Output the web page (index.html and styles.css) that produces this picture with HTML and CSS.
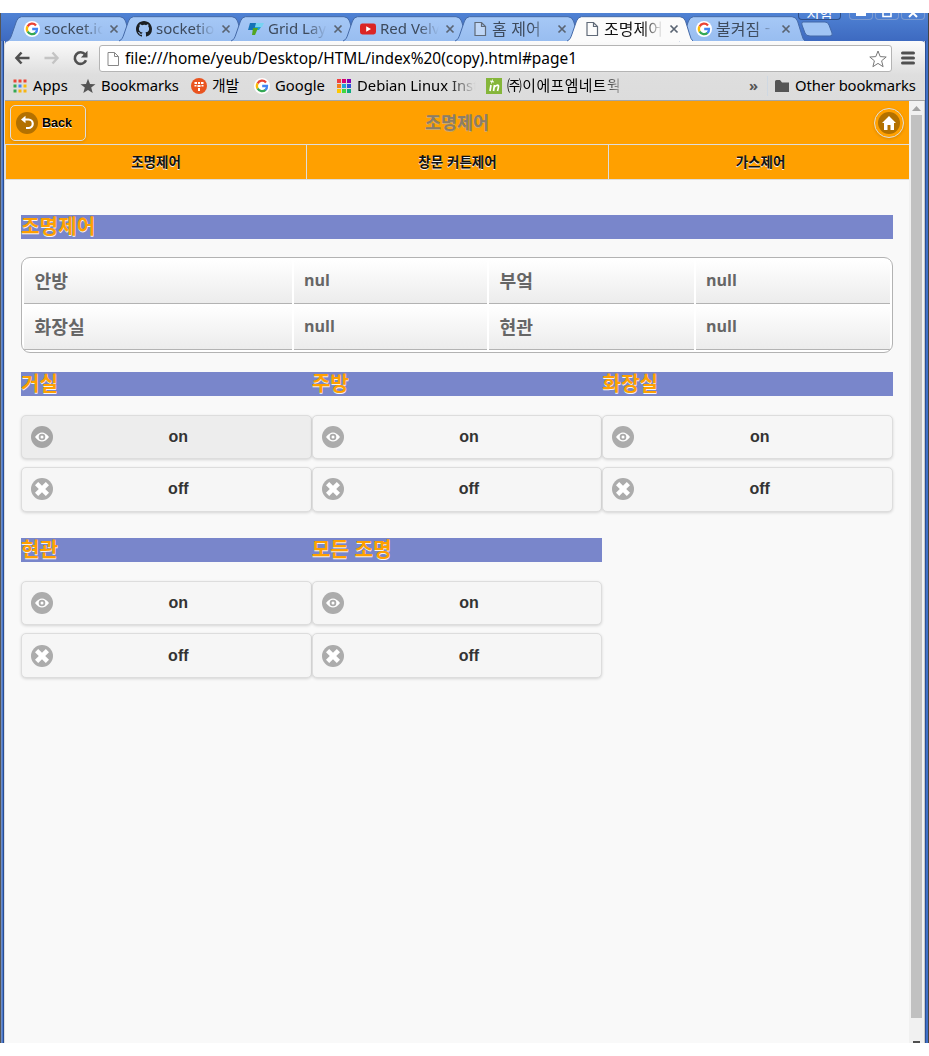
FILE: index.html
```html
<!DOCTYPE html>
<html lang="ko">
<head>
<meta charset="utf-8">
<title>조명제어</title>
<link rel="stylesheet" href="styles.css">
</head>
<body>
<svg class="defs" width="0" height="0">
  <defs>
    <linearGradient id="tabfill" x1="0" y1="0" x2="0" y2="1"><stop offset="0" stop-color="#a6c8f6"/><stop offset="1" stop-color="#98bdf0"/></linearGradient>
    <symbol id="tab" viewBox="0 0 126 26"><path d="M0 25C3 24 4 21 5 18L9.500 5Q11 1 14.500 .7H113Q117 1 118.500 5L122.500 18Q124 24 126 25" stroke="#456aa8"/></symbol>
    <symbol id="google" viewBox="0 0 16 16"><circle cx="8" cy="8" r="8" fill="#fff"/><g fill="none" stroke-width="2.3"><path d="M12 4.4A5.1 5.1 0 0 0 3.6 5.5" stroke="#ea4335"/><path d="M3.6 5.4A5.1 5.1 0 0 0 3.6 10.6" stroke="#fbbc05"/><path d="M3.6 10.5A5.1 5.1 0 0 0 11.6 11.8" stroke="#34a853"/><path d="M8.2 8H13A5 5 0 0 1 11.4 12" stroke="#4285f4"/></g></symbol>
    <symbol id="page" viewBox="0 0 16 16"><path d="M3 1.5H9.5L13.5 5.5V14.5H3ZM9.5 1.5V5.5H13.5" fill="#fff" fill-opacity=".35"/></symbol>
    <symbol id="x" viewBox="0 0 10 10"><path d="M1.5 1.5L8.5 8.5M8.5 1.5L1.5 8.5" stroke-width="1.7"/></symbol>
    <symbol id="eye" viewBox="0 0 22 22"><circle cx="11" cy="11" r="11" fill="#000" fill-opacity=".3"/><path d="M4 11Q11 1.8 18 11Q11 20.2 4 11Z" fill="#fff"/><circle cx="11" cy="11" r="2.4" fill="none" stroke="#aaa" stroke-width="1.8"/></symbol>
    <symbol id="del" viewBox="0 0 22 22"><circle cx="11" cy="11" r="11" fill="#000" fill-opacity=".3"/><path d="M18 7.2L14.8 4L11 7.8L7.2 4L4 7.2L7.8 11L4 14.8L7.2 18L11 14.2L14.8 18L18 14.8L14.2 11Z" fill="#fff"/></symbol>
  </defs>
</svg>
<div class="window">
  <div class="tabstrip">
    <div class="tab"><svg class="shape"><use href="#tab"/></svg><svg class="fav"><use href="#google"/></svg><span class="label">socket.io</span><svg class="close"><use href="#x"/></svg></div>
    <div class="tab"><svg class="shape"><use href="#tab"/></svg><svg class="fav" viewBox="0 0 16 16"><path fill="#1b1f23" d="M8 0C3.58 0 0 3.58 0 8c0 3.54 2.29 6.53 5.47 7.59.4.07.55-.17.55-.38 0-.19-.01-.82-.01-1.49-2.01.37-2.53-.49-2.69-.94-.09-.23-.48-.94-.82-1.13-.28-.15-.68-.52-.01-.53.63-.01 1.08.58 1.23.82.72 1.21 1.87.87 2.33.66.07-.52.28-.87.51-1.07-1.78-.2-3.64-.89-3.64-3.95 0-.87.31-1.59.82-2.15-.08-.2-.36-1.02.08-2.12 0 0 .67-.21 2.2.82A7.7 7.7 0 0 1 8 3.86c.68 0 1.36.09 2 .27 1.53-1.04 2.2-.82 2.2-.82.44 1.1.16 1.92.08 2.12.51.56.82 1.27.82 2.15 0 3.07-1.87 3.75-3.65 3.95.29.25.54.73.54 1.48 0 1.07-.01 1.93-.01 2.2 0 .21.15.46.55.38A8 8 0 0 0 16 8c0-4.42-3.58-8-8-8Z"/></svg><span class="label">socketio</span><svg class="close"><use href="#x"/></svg></div>
    <div class="tab"><svg class="shape"><use href="#tab"/></svg><svg class="fav" viewBox="0 0 16 16"><path d="M2 2H9L6 9H0Z" fill="#1673b7"/><path d="M8 2H16L14 6H7Z" fill="#77d3f2"/><path d="M7 6H13L11 9H6Z" fill="#1fa2d5"/><path d="M5 7H10L7 14H4Z" fill="#52a51f"/></svg><span class="label">Grid Layo</span><svg class="close"><use href="#x"/></svg></div>
    <div class="tab"><svg class="shape"><use href="#tab"/></svg><svg class="fav" viewBox="0 0 16 16"><rect y="2.5" width="16" height="11" rx="2.4" fill="#db2424"/><path d="M6.2 5.2L11 8L6.2 10.8Z" fill="#fff"/></svg><span class="label">Red Velv</span><svg class="close"><use href="#x"/></svg></div>
    <div class="tab"><svg class="shape"><use href="#tab"/></svg><svg class="fav"><use href="#page"/></svg><span class="label ko">홈 제어</span><svg class="close"><use href="#x"/></svg></div>
    <div class="tab active"><svg class="shape"><use href="#tab"/></svg><svg class="fav"><use href="#page"/></svg><span class="label ko">조명제어</span><svg class="close"><use href="#x"/></svg></div>
    <div class="tab"><svg class="shape"><use href="#tab"/></svg><svg class="fav"><use href="#google"/></svg><span class="label ko">불켜짐 -</span><svg class="close"><use href="#x"/></svg></div>
    <svg class="newtab" viewBox="0 0 34 16"><path d="M3 1H25Q28 1 29 4L32 12Q33 15 30 15H10Q6 15 5 12L2 4Q1 1 3 1Z" fill="#a0c4f4" stroke="#4268a8"/></svg>
    <div class="winbtns"><span class="wb ime">시험</span><span class="wb"><svg viewBox="0 0 20 8"><path d="M5 1.5H15" stroke="#fff" stroke-width="3"/></svg></span><span class="wb"><svg viewBox="0 0 20 8"><path d="M6 0V3.5H14V0" fill="none" stroke="#fff" stroke-width="1.6"/></svg></span><span class="wb"><svg viewBox="0 0 20 8"><path d="M6 4L10 0L14 4" fill="none" stroke="#fff" stroke-width="2"/></svg></span></div>
  </div>
  <div class="chrome">
    <div class="toolbar">
      <svg class="nav-ic" viewBox="0 0 16 16"><path d="M7 2.5L2 8L7 13.5M2 8H15" fill="none" stroke="#505050" stroke-width="2.6"/></svg>
      <svg class="nav-ic" viewBox="0 0 16 16"><path d="M9 2.5L14 8L9 13.5M14 8H1" fill="none" stroke="#c4c4c4" stroke-width="2.4"/></svg>
      <svg class="nav-ic" viewBox="0 0 16 16"><path d="M12.6 4.4A5.8 5.8 0 1 0 13.5 10.3" fill="none" stroke="#505050" stroke-width="2.6"/><path d="M15 .8V7.4H8.4Z" fill="#505050"/></svg>
      <div class="omnibox"><svg class="doc"><use href="#page"/></svg><span class="url">file:///home/yeub/Desktop/HTML/index%20(copy).html#page1</span><svg class="star" viewBox="0 0 18 18"><path d="M9 1L11.2 6.6L17.2 7L12.6 10.8L14.1 16.7L9 13.4L3.9 16.7L5.4 10.8L.8 7L6.8 6.6Z" fill="#fff" stroke="#777"/></svg></div>
      <svg class="menu" viewBox="0 0 14 14"><path d="M1.5 2H12.5M1.5 7H12.5M1.5 12H12.5" stroke="#505050" stroke-width="3" stroke-linecap="round"/></svg>
    </div>
    <div class="bookmarks">
      <div class="bm b1"><svg viewBox="0 0 16 16"><path d="M1.5 3H14.5" stroke="#ea4335" stroke-width="3" stroke-dasharray="3 2"/><path d="M1.5 8H4.5" stroke="#34a853" stroke-width="3"/><path d="M6.5 8H9.5" stroke="#4285f4" stroke-width="3"/><path d="M11.5 8H14.5" stroke="#fbbc05" stroke-width="3"/><path d="M1.5 13H4.5" stroke="#34a853" stroke-width="3"/><path d="M6.5 13H14.5" stroke="#f7b512" stroke-width="3" stroke-dasharray="3 2"/></svg><span>Apps</span></div>
      <div class="bm b2"><svg viewBox="0 0 16 16"><path d="M8 .8L10 6L15.5 6.2L11.2 9.6L12.7 15L8 12L3.3 15L4.8 9.6L.5 6.2L6 6Z" fill="#555"/></svg><span>Bookmarks</span></div>
      <div class="bm b3"><svg viewBox="0 0 16 16"><circle cx="8" cy="8" r="8" fill="#e95420"/><path d="M3.5 4H6V6H3.5ZM7 4H9V6H7ZM10 4H12.5V6H10ZM3.5 7H5.5V8.5H3.5ZM6.5 7H9.5V9H6.5ZM10.5 7H12.5V8.5H10.5ZM7 10H9V13H7Z" fill="#fff"/></svg><span class="ko">개발</span></div>
      <div class="bm b4"><svg><use href="#google"/></svg><span>Google</span></div>
      <div class="bm b5"><svg viewBox="0 0 16 16"><path d="M1 1H5V5H1Z" fill="#f04040"/><path d="M6 1H10V5H6Z" fill="#d80070"/><path d="M11 1H15V5H11Z" fill="#8000b0"/><path d="M1 6H5V10H1Z" fill="#f08020"/><path d="M6 6H10V10H6Z" fill="#20a0d8"/><path d="M11 6H15V10H11Z" fill="#3050d8"/><path d="M1 11H5V15H1Z" fill="#ffc800"/><path d="M6 11H10V15H6Z" fill="#40d840"/><path d="M11 11H15V15H11Z" fill="#10a880"/></svg><span class="fade">Debian Linux Inst</span></div>
      <div class="bm b6"><svg viewBox="0 0 16 16"><path d="M0 0H16V16H0Z" fill="#85b63a"/><path d="M5 7L4 13M8.5 7L7.5 13M8.5 9Q11.5 6 12.5 8Q12.5 10 11.5 13" fill="none" stroke="#fff" stroke-width="1.7"/><path d="M4 3L8 4M6.5 1.5L5.5 5.5" stroke="#fff"/></svg><span class="ko fade">㈜이에프엠네트웍</span></div>
      <span class="more">»</span>
      <div class="bm other"><svg viewBox="0 0 16 16"><path d="M1 3.5Q1 2 2.5 2H6L8 4.5H15V14H1Z" fill="#555"/></svg><span>Other bookmarks</span></div>
    </div>
  </div>
  <div class="viewport">
    <div class="page">
      <header class="header">
        <a class="back"><svg viewBox="0 0 22 22"><circle cx="11" cy="11" r="11" fill="#b37100"/><path d="M8 7.5H12.5A3.8 3.8 0 0 1 12.5 16H10" fill="none" stroke="#fff" stroke-width="2.2"/><path d="M5 7.5L9.5 3.8V11.2Z" fill="#fff"/></svg>Back</a>
        <h1>조명제어</h1>
        <a class="home"><svg viewBox="0 0 22 22"><circle cx="11" cy="11" r="11" fill="#b37100"/><path d="M11 4L4 11H6V18H9.5V13H12.5V18H16V11H18Z" fill="#fff"/></svg></a>
      </header>
      <nav class="navbar"><a>조명제어</a><a>창문 커튼제어</a><a>가스제어</a></nav>
      <main>
        <h3>조명제어</h3>
        <div class="table">
          <div class="td">안방</div><div class="td en">nul</div><div class="td">부엌</div><div class="td en">null</div>
          <div class="td">화장실</div><div class="td en">null</div><div class="td">현관</div><div class="td en">null</div>
        </div>
        <div class="grid">
          <section><h3>거실</h3><a class="btn pressed"><svg><use href="#eye"/></svg>on</a><a class="btn off"><svg><use href="#del"/></svg>off</a></section>
          <section><h3>주방</h3><a class="btn"><svg><use href="#eye"/></svg>on</a><a class="btn off"><svg><use href="#del"/></svg>off</a></section>
          <section><h3>화장실</h3><a class="btn"><svg><use href="#eye"/></svg>on</a><a class="btn off"><svg><use href="#del"/></svg>off</a></section>
          <section class="row2"><h3>현관</h3><a class="btn"><svg><use href="#eye"/></svg>on</a><a class="btn off"><svg><use href="#del"/></svg>off</a></section>
          <section class="row2"><h3>모든 조명</h3><a class="btn"><svg><use href="#eye"/></svg>on</a><a class="btn off"><svg><use href="#del"/></svg>off</a></section>
        </div>
      </main>
    </div>
    <div class="scrollbar"><svg viewBox="0 0 15 14"><path d="M3 10L7.5 5L12 10Z" fill="#a3a3a3"/></svg><div class="thumb"></div><div class="down"></div></div>
  </div>
</div>
</body>
</html>
```
FILE: styles.css
```css
* { box-sizing: border-box; }
body { margin: 0; padding-top: 13px; height: 1056px; overflow: hidden; background: #fff; font-family: "Noto Sans", "Noto Sans CJK KR", sans-serif; }
svg { display: block; flex: none; }
.defs { position: absolute; }
.window { width: 929px; height: 1030px; padding: 0 4px 0 5px; overflow: hidden; display: flex; flex-direction: column;
  background: linear-gradient(90deg, #555 0 1px, #6f8dc4 1px 2px, #4a78cc 2px 3px, #294d92 3px 4px, #dcdcdc 4px 5px, transparent 5px 924px, #c8c8c8 924px 925px, #2d4f91 925px 926px, #3f70c8 926px 928px, #444 928px) 0 28px no-repeat, linear-gradient(90deg, #555 0 1px, transparent 1px 928px, #444 928px), linear-gradient(#4f82d4, #3c68bf 30px); }

/* Tabs */
.tabstrip { position: relative; height: 28px; padding: 3px 0 0 5px; display: flex; flex: none; }
.tab { position: relative; width: 122px; margin-right: -10px; height: 25px; display: flex; align-items: center; padding-left: 14px; color: #3d4a5c; font-size: 15px; }
.tab > * { position: relative; }
.tab .shape { position: absolute; left: -3px; top: 0; width: 126px; height: 26px; fill: url(#tabfill); }
.tab.active { z-index: 2; color: #111; }
.tab.active .shape { fill: #fbfbfb; }
.fav { width: 16px; height: 16px; stroke: none; }
.fav use[href="#page"] { stroke: #606a78; stroke-width: 1.2; }
.label { margin: -2px 0 0 4px; width: 60px; white-space: nowrap; line-height: 22px; -webkit-mask-image: linear-gradient(90deg, #000 65%, transparent 98%); }
.ko { font-family: "Noto Sans CJK KR", sans-serif; }
.tab .ko { font-size: 16px; }
.close { width: 10px; height: 10px; margin-left: 5px; stroke: #5a6472; }
.newtab { width: 34px; height: 16px; margin: 5px 0 0 6px; }
.winbtns { position: absolute; right: 0; top: 0; display: flex; gap: 2px; height: 8px; overflow: hidden; }
.wb { width: 24px; height: 7px; border: 1px solid #7d9bd0; border-top: 0; border-radius: 0 0 4px 4px; }
.wb svg { width: 20px; height: 8px; margin-left: 1px; }
.wb.ime { width: 43px; margin-right: 6px; border-color: #2f4f88; color: #fff; font: 14px/0 "Noto Sans CJK KR", sans-serif; text-align: center; overflow: hidden; }

/* Toolbar */
.chrome { flex: none; height: 60px; background: linear-gradient(#fbfbfb, #dedede 34px, #dcdcdc); border-radius: 4px 4px 0 0; border-bottom: 1px solid #a5a5a5; }
.toolbar { height: 31px; padding: 4px 10px 0 9px; display: flex; align-items: flex-start; }
.nav-ic { width: 17px; height: 16px; margin: 5px 12px 0 0; }
.omnibox { width: 793px; height: 27px; margin-left: -2px; border: 1px solid #b4b4b4; border-radius: 3px; background: #fff; display: flex; align-items: center; padding: 0 4px 0 5px; }
.doc { width: 16px; height: 16px; stroke: #888; }
.url { margin: -2px 0 0 4px; font-size: 15.45px; color: #000; flex: 1; white-space: nowrap; }
.star { width: 18px; height: 18px; }
.menu { width: 14px; height: 14px; margin: 6px 0 0 9px; }
.bookmarks { position: relative; display: flex; align-items: center; height: 27px; font-size: 14.8px; color: #000; padding-left: 7px; }
.bm { display: flex; align-items: center; white-space: nowrap; flex: none; }
.bm svg { width: 16px; height: 16px; margin-right: 5px; }
.bm span { line-height: 22px; margin-top: -2px; }
.b1 { width: 68px; } .b2 { width: 111px; } .b3 { width: 63px; } .b4 { width: 82px; } .b5 { width: 150px; } .b6 { width: 140px; }
.b2 { letter-spacing: -.1px; }
.bm .fade { flex: 1; -webkit-mask-image: linear-gradient(90deg, #000 70%, transparent 92%); }
.b6 .fade { letter-spacing: .5px; -webkit-mask-image: linear-gradient(90deg, #000 80%, transparent); }
.more { margin: -2px 0 0 123px; width: 18px; color: #555; font-weight: 700; line-height: 22px; }
.other { border-left: 1px solid #cfd8e2; padding-left: 6px; letter-spacing: -.12px; }

/* Page */
.viewport { flex: 1; display: flex; min-height: 0; }
.page { width: 904px; background: #f9f9f9; }
.header { height: 44px; display: flex; align-items: center; justify-content: space-between; padding: 0 5px; background: #ffa000; border-bottom: 1px solid #ddd; text-shadow: 0 1px 0 #f3f3f3; }
.back { width: 76px; height: 36px; border: 1px solid #ddd; border-radius: 5px; display: flex; align-items: center; padding-left: 5px; font: 700 12.5px "Liberation Sans", sans-serif; color: #000; box-shadow: 0 1px 3px rgba(0,0,0,.15); }
.back svg { width: 22px; height: 22px; margin-right: 4px; }
.header h1 { margin: -2px 0 0 -46px; font: 700 17.4px "Noto Sans CJK KR", sans-serif; color: #8b7d68; text-shadow: 0 1px 0 #c9a86c; }
.home { width: 30px; height: 30px; border: 1px solid #ddd; border-radius: 50%; display: grid; place-items: center; box-shadow: 0 1px 3px rgba(0,0,0,.15); }
.home svg { width: 22px; height: 22px; }
.navbar { display: grid; grid-template-columns: 301px 302px 300px; height: 35px; border-bottom: 1px solid #ddd; border-left: 1px solid #ddd; background: #ffa000; }
.navbar a { display: grid; place-items: center; padding-bottom: 2px; border-right: 1px solid #ddd; font: 700 13.5px "Noto Sans CJK KR", sans-serif; color: #111; text-shadow: 0 1px 0 #f3f3f3; }
.navbar a:last-child { border: 0; padding-left: 3px; }
main { padding: 35px 16px; }
h3 { margin: 0; height: 24px; background: #7986cb; color: #ffa000; font: 700 20.2px/22px "Noto Sans CJK KR", sans-serif; text-shadow: 0 1px 0 #f3f3f3; }
.table { margin-top: 18px; height: 96px; border: 1px solid #b3b3b3; border-radius: 9px; background: #fff; padding: 2px; display: grid; grid-template-columns: 268px 193px 205px 194px; grid-template-rows: 44px 44px; gap: 2px; overflow: hidden; }
.td { padding-left: 10.5px; border-bottom: 1px solid #b3b3b3; background: linear-gradient(#fff, #ececec); font: 700 18.2px/40px "Noto Sans CJK KR", sans-serif; color: #666; }
.td.en { padding-left: 10px; font: 700 16px/40px "Open Sans", sans-serif; }
.grid { margin-top: 19px; display: grid; grid-template-columns: repeat(3, 1fr); row-gap: 26px; }
.btn { position: relative; display: flex; align-items: center; justify-content: center; height: 44px; margin-top: 19px; padding: 0 0 1px 24px; border: 1px solid #ddd; border-radius: 5px; background: #f6f6f6; box-shadow: 0 1px 3px rgba(0,0,0,.15); font: 700 16px "Liberation Sans", sans-serif; color: #333; text-shadow: 0 1px 0 #f3f3f3; }
.btn svg { position: absolute; left: 9px; top: 10px; width: 22px; height: 22px; }
.pressed { background: #ededed; }
.off { margin-top: 8px; height: 45px; padding-bottom: 2px; }
.row2 .off { padding-bottom: 0; }
.row2 .off svg { top: 11px; }
.scrollbar { width: 15px; background: #f1f1f1; display: flex; flex-direction: column; align-items: center; }
.scrollbar svg { width: 15px; height: 14px; }
.thumb { width: 11px; height: 904px; background: #c1c1c1; }
.down { width: 7px; height: 2px; margin-top: 23px; background: #505050; }
```
